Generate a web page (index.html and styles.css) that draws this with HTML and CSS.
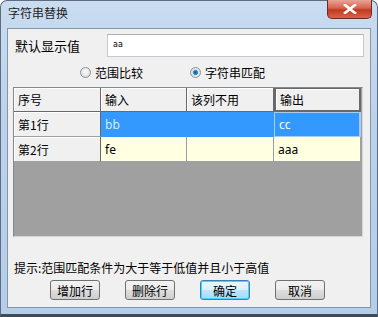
FILE: index.html
```html
<!DOCTYPE html>
<html lang="zh-CN">
<head>
    <meta charset="UTF-8">
    <title>字符串替换</title>
    <link rel="stylesheet" href="styles.css">
</head>
<body>
    <div class="window">
        <div class="titlebar">
            <span class="title">字符串替换</span>
            <div class="close-btn">
                <svg width="14" height="10" viewBox="0 0 14 10"><path d="M2 1 L12 9 M12 1 L2 9" stroke="#fff" stroke-width="2.6" stroke-linecap="square"/></svg>
            </div>
        </div>
        <div class="client">
            <div class="field-row">
                <span class="field-label">默认显示值</span>
                <div class="text-input">aa</div>
            </div>
            <div class="radio-row">
                <label class="radio"><span class="radio-dot"></span>范围比较</label>
                <label class="radio"><span class="radio-dot checked"></span>字符串匹配</label>
            </div>
            <div class="grid">
                <div class="cell head">序号</div>
                <div class="cell head">输入</div>
                <div class="cell head">该列不用</div>
                <div class="cell head focus">输出</div>

                <div class="cell head rowhead">第1行</div>
                <div class="cell sel">bb</div>
                <div class="cell sel"></div>
                <div class="cell sel current">cc</div>

                <div class="cell head rowhead">第2行</div>
                <div class="cell data">fe</div>
                <div class="cell data"></div>
                <div class="cell data">aaa</div>
            </div>
            <div class="hint">提示:范围匹配条件为大于等于低值并且小于高值</div>
            <div class="button-row">
                <button class="btn">增加行</button>
                <button class="btn">删除行</button>
                <button class="btn default">确定</button>
                <button class="btn">取消</button>
            </div>
        </div>
    </div>
</body>
</html>
```

FILE: styles.css
```css
body {
    margin: 0;
    padding: 0;
    background: #ffffff;
    font-family: "Noto Sans CJK SC", "Noto Sans", sans-serif;
    font-size: 12px;
    color: #000;
}
.window {
    width: 378px;
    height: 317px;
    box-sizing: border-box;
    background: linear-gradient(180deg, #c9dcf0 0%, #bcd2ea 40%, #b6cde8 100%);
    border: 1px solid #5d6c80;
    border-bottom: 3px solid #3e4a58;
    border-radius: 7px 7px 0 0;
    display: flex;
    flex-direction: column;
}
.titlebar {
    height: 27px;
    display: flex;
    align-items: flex-start;
    padding-left: 7px;
}
.title {
    margin-top: 3px;
    font-size: 12px;
    color: #1e1e1e;
}
.close-btn {
    margin-left: auto;
    margin-right: 5px;
    margin-top: -1px;
    width: 45px;
    height: 19px;
    box-sizing: border-box;
    border: 1px solid #6d2a22;
    border-top: none;
    border-radius: 0 0 5px 5px;
    background: linear-gradient(180deg, #e8a496 0%, #d7634f 45%, #c0391f 55%, #d9644a 100%);
    display: flex;
    justify-content: center;
    align-items: center;
}
.client {
    margin: 0 6px;
    height: 280px;
    box-sizing: border-box;
    background: #f0f0f0;
    border: 1px solid #8596ab;
    padding: 5px 5px 0 5px;
    display: flex;
    flex-direction: column;
}
.field-row {
    display: flex;
    align-items: center;
    height: 23px;
}
.field-label {
    width: 92px;
    padding-left: 2px;
    font-size: 13px;
}
.text-input {
    flex: 1;
    height: 23px;
    box-sizing: border-box;
    margin-right: 1px;
    background: #fff;
    border: 1px solid #c5c8cc;
    border-top-color: #abadb3;
    font-family: "DejaVu Sans", sans-serif;
    font-size: 8px;
    padding: 5px 5px;
}
.radio-row {
    display: flex;
    height: 30px;
    align-items: center;
    padding-left: 67px;
    gap: 47px;
}
.radio {
    display: flex;
    align-items: center;
    gap: 4px;
    font-size: 12px;
}
.radio-dot {
    width: 11px;
    height: 11px;
    box-sizing: border-box;
    border-radius: 50%;
    border: 1px solid #8e8f8f;
    background: radial-gradient(circle at 50% 40%, #fdfdfd 0%, #e0e0e0 70%, #cfcfcf 100%);
}
.radio-dot.checked {
    background: radial-gradient(circle, #1a5b8c 0%, #2f8fcd 35%, #d6e5f2 45%, #e8e8e8 100%);
}
.grid {
    width: 350px;
    height: 150px;
    box-sizing: border-box;
    background: #a0a0a0;
    border: 1px solid #828790;
    border-right-color: #d7d7d7;
    border-bottom-color: #d7d7d7;
    display: grid;
    grid-template-columns: 87px 86px 87px 87px;
    grid-template-rows: 24px 25px 25px;
    align-content: start;
}
.cell {
    box-sizing: border-box;
    display: flex;
    align-items: center;
    padding-left: 4px;
    border-right: 1px solid #a0a0a0;
    border-bottom: 1px solid #a0a0a0;
    font-family: "Noto Sans", "Noto Sans CJK SC", sans-serif;
    font-size: 12px;
}
.head {
    background: #f0f0f0;
    border-right-color: #696969;
    border-bottom-color: #696969;
    box-shadow: inset 1px 1px 0 #ffffff;
    font-family: "Noto Sans CJK SC", sans-serif;
}
.head.focus {
    border: 2px solid #696969;
    border-top-width: 1px;
}
.rowhead {
    border-bottom-color: #a0a0a0;
}
.sel {
    background: #3399ff;
    color: #dbeaff;
    border-color: #3399ff;
}
.sel.current {
    color: #ffffff;
    border: 1px solid #a8cdf5;
    border-right-width: 2px;
}
.data {
    background: #ffffe1;
}
.hint {
    margin-top: 22px;
    padding-left: 1px;
    font-size: 12px;
    height: 18px;
}
.button-row {
    display: flex;
    padding-left: 37px;
    margin-top: 3px;
    gap: 25px;
}
.btn {
    width: 50px;
    height: 20px;
    box-sizing: border-box;
    border: 1px solid #707070;
    border-radius: 3px;
    background: linear-gradient(180deg, #f2f2f2 0%, #ebebeb 50%, #dddddd 51%, #cfcfcf 100%);
    font-family: "Noto Sans CJK SC", sans-serif;
    font-size: 12px;
    padding: 0;
    line-height: 17px;
    color: #000;
}
.btn.default {
    border-color: #3c7fb1;
    box-shadow: inset 0 0 0 1px #48d3ff;
    background: linear-gradient(180deg, #eaf6fd 0%, #d9f0fc 50%, #bee6fd 51%, #a7d9f5 100%);
}
```
